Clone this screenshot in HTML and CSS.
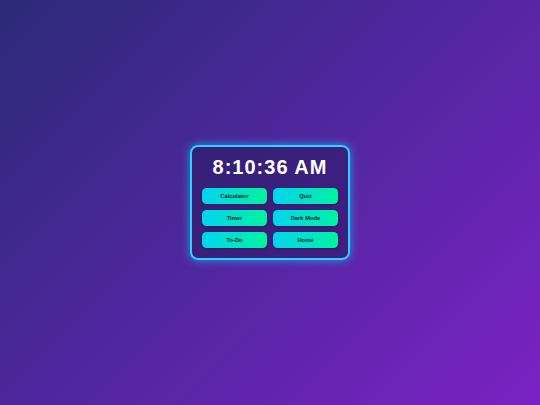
FILE: index.html
```html
<!DOCTYPE html>
<html>
<head>
<meta charset="utf-8">
<link rel="stylesheet" href="styles.css">
</head>
<body>
<div class="page">
  <div class="card">
    <div class="clock">8:10:36 AM</div>
    <div class="grid">
      <button class="btn">Calculator</button>
      <button class="btn">Quiz</button>
      <button class="btn">Timer</button>
      <button class="btn">Dark Mode</button>
      <button class="btn">To-Do</button>
      <button class="btn">Home</button>
    </div>
  </div>
</div>
</body>
</html>
```
FILE: styles.css
```css
html, body {
  margin: 0;
  padding: 0;
  height: 100%;
}
body {
  background: linear-gradient(135deg, #2b2a78 0%, #5226a0 50%, #7b22c4 100%);
  font-family: "Liberation Sans", Arial, sans-serif;
}
.page {
  height: 100%;
  display: flex;
  align-items: center;
  justify-content: center;
}
.card {
  box-sizing: border-box;
  width: 160px;
  height: 115px;
  padding: 8px 10px 10px;
  border: 2px solid #2fcfff;
  border-radius: 8px;
  background: rgba(34, 25, 90, 0.5);
  box-shadow: 0 0 10px rgba(0, 210, 255, 0.7);
  display: flex;
  flex-direction: column;
}
.clock {
  color: #ffffff;
  font-weight: bold;
  font-size: 20px;
  letter-spacing: 1px;
  line-height: 25px;
  text-align: center;
  margin-bottom: 8px;
}
.grid {
  display: grid;
  grid-template-columns: 1fr 1fr;
  grid-auto-rows: 16px;
  gap: 6px;
}
.btn {
  border: none;
  margin: 0;
  padding: 0;
  border-radius: 4.5px;
  background: linear-gradient(90deg, #00d4f0 0%, #00f2a0 100%);
  color: #1b1b2e;
  font-family: "Liberation Sans", Arial, sans-serif;
  font-weight: bold;
  font-size: 5.8px;
  box-shadow: 0 1px 3px rgba(0, 0, 0, 0.25);
}
```
